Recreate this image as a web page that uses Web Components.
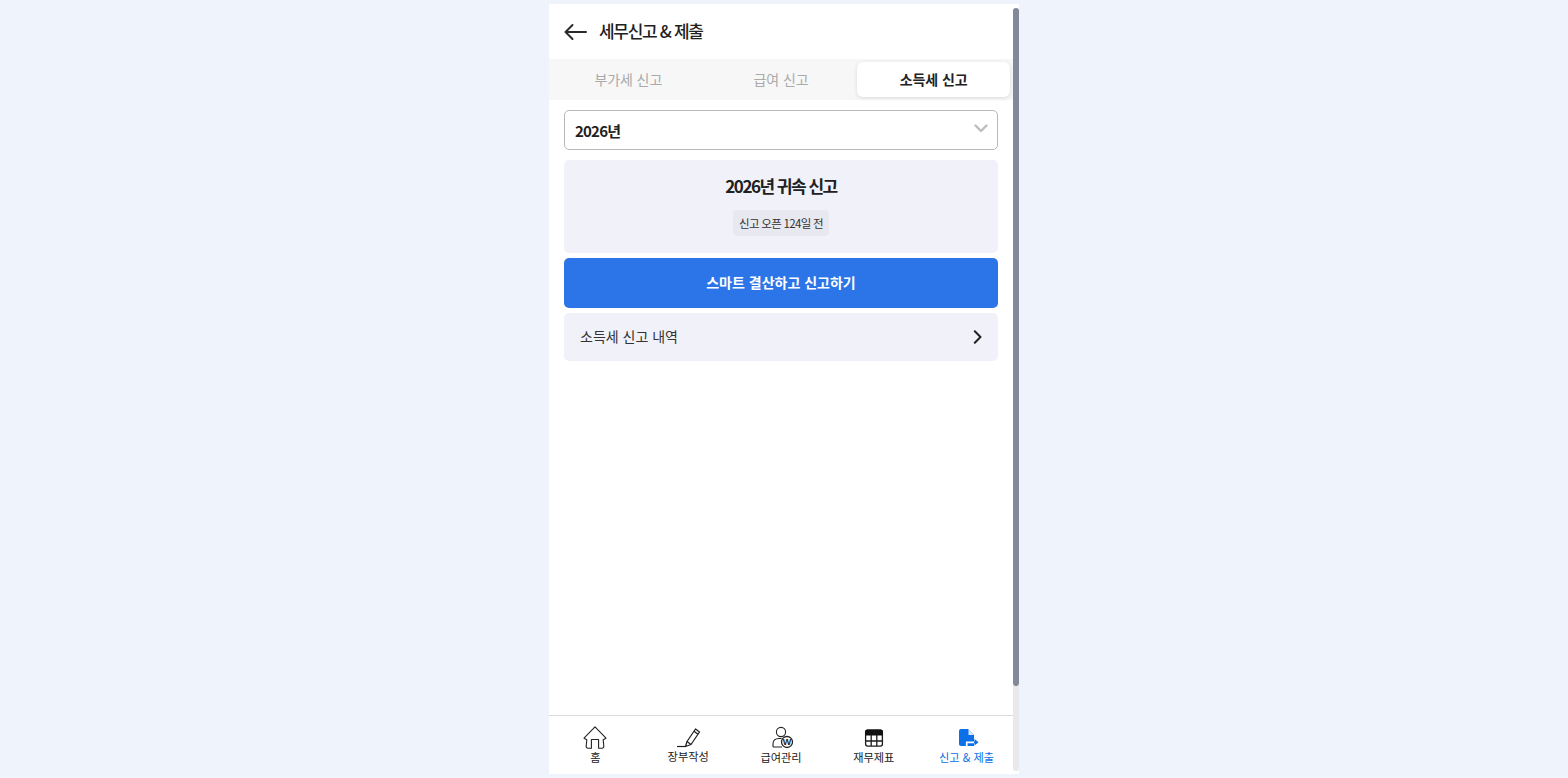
<!DOCTYPE html>
<html lang="ko">
<head>
<meta charset="utf-8">
<title>세무신고 & 제출</title>
<style>
  html, body { height: 100%; margin: 0; }
  body {
    background: #eff3fc;
    font-family: "Noto Sans CJK KR", "Noto Sans", sans-serif;
    color: #212121;
    overflow: hidden;
  }
</style>
</head>
<body>
<tax-app>
  <tax-header slot="header" title="세무신고 & 제출"></tax-header>
  <tax-tabs slot="tabs" tabs='["부가세 신고","급여 신고","소득세 신고"]' active="2"></tax-tabs>
  <tax-select year="2026년"></tax-select>
  <tax-card title="2026년 귀속 신고" badge="신고 오픈 124일 전"></tax-card>
  <tax-button label="스마트 결산하고 신고하기"></tax-button>
  <tax-link label="소득세 신고 내역"></tax-link>
  <tax-nav slot="nav"></tax-nav>
</tax-app>

<script>
class TaxApp extends HTMLElement {
  constructor() {
    super();
    this.attachShadow({ mode: 'open' });
    this.shadowRoot.innerHTML = `
      <style>
        :host {
          display: flex;
          width: 470px;
          height: 770px;
          margin: 4px auto 0;
          background: #fff;
        }
        .main {
          width: 464px;
          display: flex;
          flex-direction: column;
        }
        .content {
          flex: 1;
          display: flex;
          flex-direction: column;
          padding: 10px 15px;
        }
        .track {
          width: 6px;
          margin: 4px 0 3px;
          background: #e9e9ec;
          border-radius: 3px;
        }
        .thumb {
          height: 678px;
          background: #83889b;
          border-radius: 3px;
        }
      </style>
      <div class="main">
        <slot name="header"></slot>
        <slot name="tabs"></slot>
        <div class="content"><slot></slot></div>
        <slot name="nav"></slot>
      </div>
      <div class="track"><div class="thumb"></div></div>
    `;
  }
}

class TaxHeader extends HTMLElement {
  constructor() {
    super();
    this.attachShadow({ mode: 'open' });
  }
  connectedCallback() {
    this.shadowRoot.innerHTML = `
      <style>
        :host {
          display: flex;
          align-items: center;
          gap: 11px;
          height: 55px;
          padding-left: 15px;
          box-sizing: border-box;
        }
        svg { width: 24px; height: 18px; display: block; }
        span {
          font-size: 17px;
          font-weight: 500;
          letter-spacing: -1.3px;
          margin-top: -2px;
          color: #212121;
        }
      </style>
      <svg viewBox="0 0 24 18" fill="none" stroke="#2a2a2a" stroke-width="2" stroke-linecap="round" stroke-linejoin="round">
        <path d="M22 9H1.5M8.5 2 1.5 9l7 7"/>
      </svg>
      <span></span>
    `;
    this.shadowRoot.querySelector('span').textContent = this.getAttribute('title');
  }
}

class TaxTabs extends HTMLElement {
  constructor() {
    super();
    this.attachShadow({ mode: 'open' });
  }
  connectedCallback() {
    const tabs = JSON.parse(this.getAttribute('tabs') || '[]');
    const active = Number(this.getAttribute('active') || 0);
    this.shadowRoot.innerHTML = `
      <style>
        :host {
          display: grid;
          grid-template-columns: repeat(3, 1fr);
          height: 41px;
          padding: 3px;
          box-sizing: border-box;
          background: #f7f7f7;
        }
        div {
          display: flex;
          align-items: center;
          justify-content: center;
          padding-bottom: 1px;
          font-size: 14px;
          letter-spacing: -0.1px;
          color: #aaa;
          border-radius: 6px;
        }
        .on {
          background: #fff;
          color: #212121;
          font-weight: 700;
          box-shadow: 0 1px 4px rgba(0, 0, 0, 0.12);
        }
      </style>
      ${tabs.map((t, i) => `<div class="${i === active ? 'on' : ''}">${t}</div>`).join('')}
    `;
  }
}

class TaxSelect extends HTMLElement {
  constructor() {
    super();
    this.attachShadow({ mode: 'open' });
  }
  connectedCallback() {
    this.shadowRoot.innerHTML = `
      <style>
        :host {
          display: flex;
          align-items: center;
          justify-content: space-between;
          height: 40px;
          padding: 1px 9px 0 10px;
          box-sizing: border-box;
          border: 1px solid #b9b9b9;
          border-radius: 5px;
          margin-bottom: 10px;
          font-size: 15px;
          font-weight: 700;
          letter-spacing: -0.8px;
          color: #212121;
        }
        svg { width: 14px; height: 9px; display: block; margin-top: -5px; }
      </style>
      <span>${this.getAttribute('year')}</span>
      <svg viewBox="0 0 14 9" fill="none" stroke="#bdbdbd" stroke-width="2.4" stroke-linecap="round" stroke-linejoin="round">
        <path d="M1.5 1.5 7 7l5.5-5.5"/>
      </svg>
    `;
  }
}

class TaxCard extends HTMLElement {
  constructor() {
    super();
    this.attachShadow({ mode: 'open' });
  }
  connectedCallback() {
    this.shadowRoot.innerHTML = `
      <style>
        :host {
          display: flex;
          flex-direction: column;
          align-items: center;
          height: 93px;
          padding-top: 14px;
          box-sizing: border-box;
          background: #f1f2f9;
          border-radius: 5px;
          margin-bottom: 5px;
        }
        h3 {
          margin: 0;
          font-size: 17px;
          line-height: 24px;
          font-weight: 700;
          letter-spacing: -1.5px;
          color: #212121;
        }
        span {
          margin-top: 12px;
          height: 26px;
          display: flex;
          align-items: center;
          padding: 0 6px;
          background: #e7e8f0;
          border-radius: 4px;
          font-size: 11.5px;
          letter-spacing: -0.7px;
          color: #333;
        }
      </style>
      <h3>${this.getAttribute('title')}</h3>
      <span>${this.getAttribute('badge')}</span>
    `;
  }
}

class TaxButton extends HTMLElement {
  constructor() {
    super();
    this.attachShadow({ mode: 'open' });
  }
  connectedCallback() {
    this.shadowRoot.innerHTML = `
      <style>
        :host {
          display: flex;
          align-items: center;
          justify-content: center;
          height: 50px;
          padding-bottom: 2px;
          box-sizing: border-box;
          background: #2b75e8;
          border-radius: 5px;
          margin-bottom: 5px;
          font-size: 14px;
          font-weight: 700;
          color: #fff;
        }
      </style>
      ${this.getAttribute('label')}
    `;
  }
}

class TaxLink extends HTMLElement {
  constructor() {
    super();
    this.attachShadow({ mode: 'open' });
  }
  connectedCallback() {
    this.shadowRoot.innerHTML = `
      <style>
        :host {
          display: flex;
          align-items: center;
          justify-content: space-between;
          height: 48px;
          padding: 0 16px;
          box-sizing: border-box;
          background: #f1f2f9;
          border-radius: 5px;
          font-size: 14px;
          color: #333;
        }
        span { margin-top: -2px; }
        svg { width: 9px; height: 14px; display: block; }
      </style>
      <span>${this.getAttribute('label')}</span>
      <svg viewBox="0 0 9 14" fill="none" stroke="#212121" stroke-width="2" stroke-linecap="round" stroke-linejoin="round">
        <path d="M1.8 1.2 7.5 7l-5.7 5.8"/>
      </svg>
    `;
  }
}

class TaxNav extends HTMLElement {
  constructor() {
    super();
    this.attachShadow({ mode: 'open' });
  }
  connectedCallback() {
    const items = [
      { label: '홈', icon: `<svg viewBox="0 0 26 24" fill="none" stroke="#222" stroke-width="1.1" stroke-linejoin="round"><path d="M13 .8 2 12.2l2.8 1.6-.6 6.4a1.8 1.8 0 0 0 1.8 2h3.400v-8.700h7.200v8.700H20a1.800 1.800 0 0 0 1.800-2l-.6-6.400 2.800-1.600z"/></svg>` },
      { label: '장부작성', lift: true, icon: `<svg viewBox="0 0 26 24" fill="none" stroke="#1c1c1c" stroke-width="1.2" stroke-linejoin="round"><path d="M2 20.5h9"/><path d="M10.5 20.5 12 15.5 20.5 3l4 3L16 18.5z"/><path d="M12 15.5l4 3M19 5.2l4 3"/></svg>` },
      { label: '급여관리', icon: `<svg viewBox="0 0 26 24" fill="none" stroke="#222" stroke-width="1.1"><circle cx="13" cy="6" r="4.6"/><path d="M5 21v-3c0-3.4 2.4-5.500 6-5.500h2.500M5 21h9"/><circle cx="19" cy="16" r="5.500" stroke-width="1.300"/><text x="19" y="19.200" font-size="9" font-weight="700" stroke="none" fill="#222" text-anchor="middle" font-family="Liberation Sans, sans-serif">W</text></svg>` },
      { label: '재무제표', icon: `<svg viewBox="0 0 26 24" fill="none" stroke="#1c1c1c" stroke-width="1.3"><rect x="4.6" y="4.100" width="16.800" height="16" rx="2"/><path d="M4.600 15h16.800M10.200 9v11M15.800 9v11"/><path d="M6.500 3.500h13A2.500 2.500 0 0 1 22 6v3.500H4V6a2.500 2.500 0 0 1 2.500-2.500z" fill="#111" stroke="none"/></svg>` },
      { label: '신고 & 제출', active: true, icon: `<svg viewBox="0 0 26 24"><path d="M7 3h7l6 6v11H7a2 2 0 0 1-2-2V5a2 2 0 0 1 2-2z" fill="#0b6fe8"/><path d="M14.500 3.500v5.500h5.500z" fill="#dbe9fb"/><path d="M12.700 20v-3.700h7.300" fill="none" stroke="#fff" stroke-width="1.700"/><path d="M20 16.300h2" fill="none" stroke="#0b6fe8" stroke-width="1.700"/><path d="M20.500 13l4 3.300-4 3.300z" fill="#0b6fe8"/></svg>` }
    ];
    this.shadowRoot.innerHTML = `
      <style>
        :host {
          display: grid;
          grid-template-columns: repeat(5, 1fr);
          height: 59px;
          box-sizing: border-box;
          border-top: 1px solid #dcdcdc;
        }
        div {
          display: flex;
          flex-direction: column;
          align-items: center;
          padding-top: 10px;
          font-size: 11.2px;
          line-height: 16px;
          color: #212121;
        }
        svg { width: 26px; height: 24px; display: block; margin-bottom: -1px; }
        .active { color: #0b6fe8; }
        .lift span { margin-top: -1px; }
      </style>
      ${items.map((it) => `
        <div class="${it.active ? 'active' : ''} ${it.lift ? 'lift' : ''}">
          ${it.icon}
          <span>${it.label.replace('&', '&amp;')}</span>
        </div>
      `).join('')}
    `;
  }
}

customElements.define('tax-app', TaxApp);
customElements.define('tax-header', TaxHeader);
customElements.define('tax-tabs', TaxTabs);
customElements.define('tax-select', TaxSelect);
customElements.define('tax-card', TaxCard);
customElements.define('tax-button', TaxButton);
customElements.define('tax-link', TaxLink);
customElements.define('tax-nav', TaxNav);
</script>
</body>
</html>
